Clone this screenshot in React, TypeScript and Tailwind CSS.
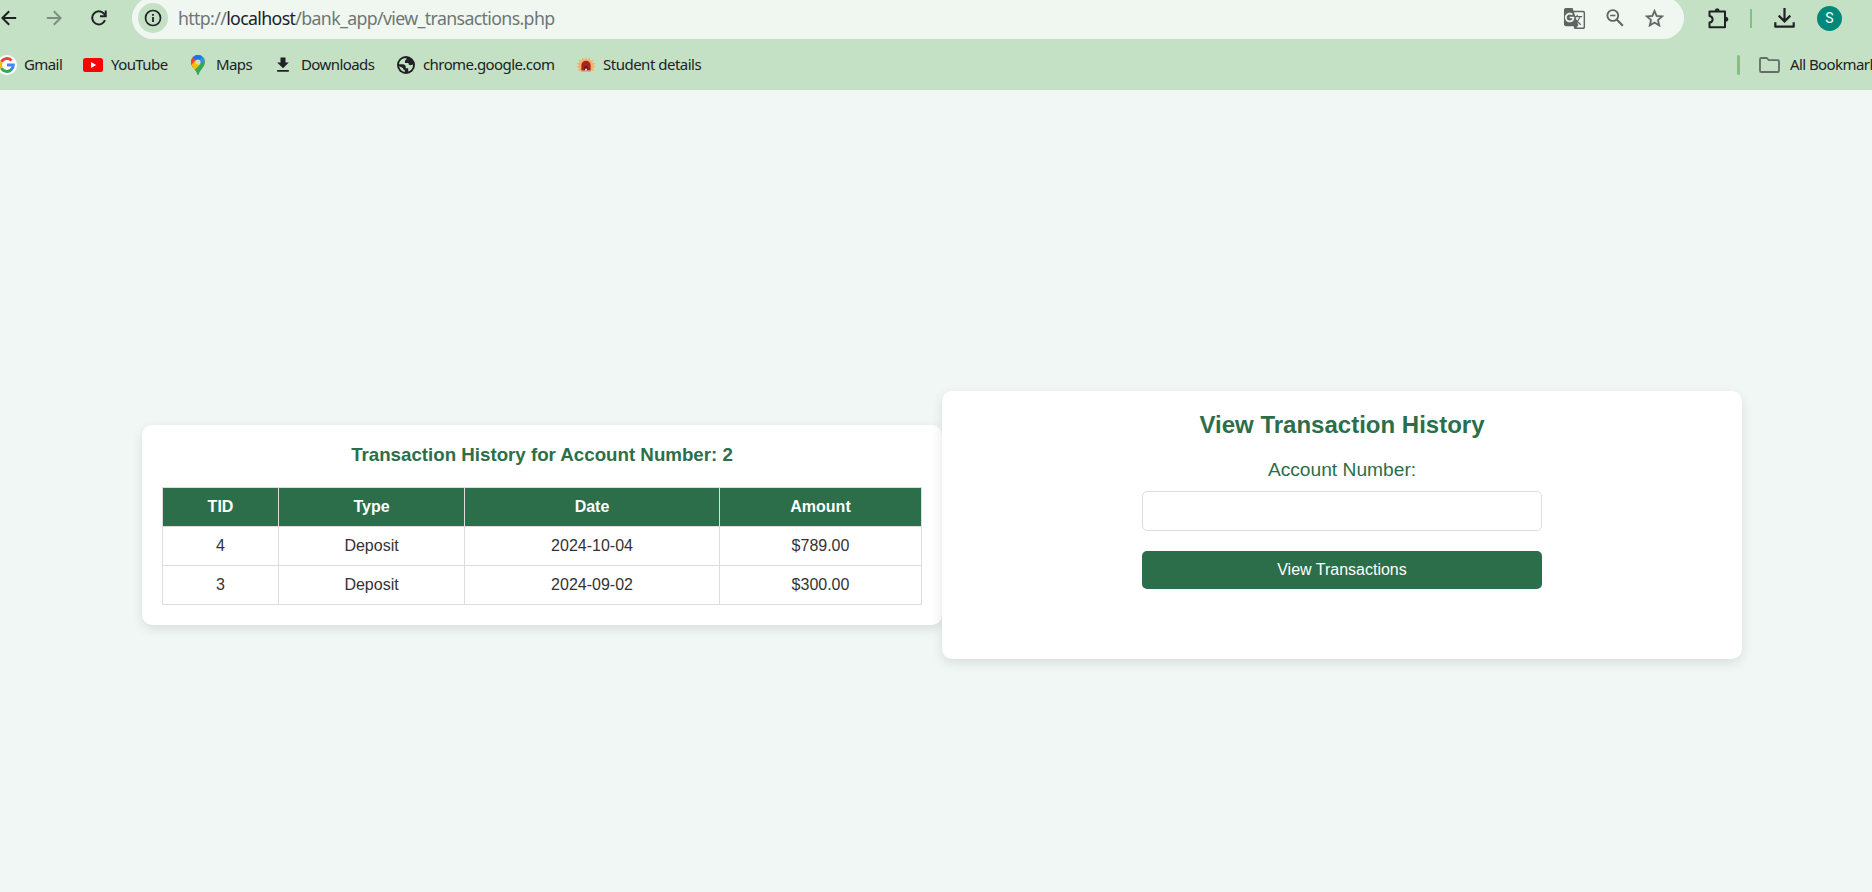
import React from 'react';
import { MdFileDownload, MdGTranslate } from 'react-icons/md';

type IconProps = { className?: string };

const BackIcon = ({ className }: IconProps) => (
  <svg viewBox="0 0 16 16" className={className} fill="none" stroke="currentColor" strokeWidth="2">
    <path d="M15.2 8H2M8.2 1.2 1.4 8l6.8 6.8" />
  </svg>
);

const ReloadIcon = ({ className }: IconProps) => (
  <svg viewBox="0 0 16 16" className={className} fill="none" stroke="currentColor" strokeWidth="2">
    <path d="M14 10.2A6.6 6.6 0 1 1 12.9 3.6L14.6 5.6" />
    <path d="M14.7 0.6V6.3H9" />
  </svg>
);

const InfoIcon = ({ className }: IconProps) => (
  <svg viewBox="0 0 18 18" className={className} fill="none" stroke="currentColor">
    <circle cx="9" cy="9" r="7.5" strokeWidth="1.7" />
    <path d="M9 8v5M9 5v1.8" strokeWidth="1.8" />
  </svg>
);

const ZoomOutIcon = ({ className }: IconProps) => (
  <svg viewBox="0 0 18 18" className={className} fill="none" stroke="currentColor">
    <circle cx="6.8" cy="6.5" r="5.4" strokeWidth="1.9" />
    <path d="M10.7 10.6 16.8 16.7" strokeWidth="2.1" />
    <path d="M4.2 6.5h5.2" strokeWidth="1.6" />
  </svg>
);

const StarIcon = ({ className }: IconProps) => (
  <svg viewBox="2 2 20 19" className={className} fill="currentColor">
    <path
      stroke="currentColor"
      strokeWidth=".3"
      d="M22 9.24l-7.19-.62L12 2 9.19 8.63 2 9.24l5.46 4.73L5.82 21 12 17.27 18.18 21l-1.63-7.03L22 9.24zM12 15.4l-3.76 2.27 1-4.28-3.32-2.88 4.38-.38L12 6.1l1.71 4.04 4.38.38-3.32 2.88 1 4.28L12 15.4z"
    />
  </svg>
);

const ExtensionIcon = ({ className }: IconProps) => (
  <svg viewBox="0 0 21 21" className={className}>
    <path
      d="M1.500 3.500h15.500v15.700H1.500v-4.600c2-.4 3.100-1.600 3.100-3.200S3.500 8.500 1.500 8.100z"
      fill="none"
      stroke="currentColor"
      strokeWidth="2"
      strokeLinejoin="round"
    />
    <path d="M7 2.800a2.200 2.200 0 0 1 4.400 0zM17.800 9a2.300 2.300 0 0 1 0 4.600z" fill="currentColor" stroke="currentColor" strokeWidth=".4" />
  </svg>
);

const DownloadTrayIcon = ({ className }: IconProps) => (
  <svg viewBox="0 0 21 20" className={className} fill="none" stroke="currentColor" strokeWidth="2.200">
    <path d="M10.500 0v13M4.700 7.600l5.800 5.800 5.800-5.800" />
    <path d="M1.300 14.200v4.500h18.400v-4.500" strokeLinejoin="round" />
  </svg>
);

const FolderIcon = ({ className }: IconProps) => (
  <svg viewBox="0 0 21 16" className={className} fill="none" stroke="currentColor" strokeWidth="1.800" strokeLinejoin="round">
    <path d="M1 2.300Q1 1 2.300 1H7.800L9.800 3.200H18.700Q20 3.200 20 4.500V13.700Q20 15 18.700 15H2.300Q1 15 1 13.700z" />
  </svg>
);

const GoogleIcon = ({ className }: IconProps) => (
  <svg viewBox="0 0 20 20" className={className}>
    <circle cx="10" cy="10" r="10" fill="#fff" />
    <g fill="none" strokeWidth="3">
      <path d="M4.400 6.900A6.300 6.300 0 0 1 14.500 5.500" stroke="#ea4335" />
      <path d="M4.400 13.100A6.300 6.300 0 0 1 4.400 6.900" stroke="#fbbc05" />
      <path d="M14.300 14.600A6.300 6.300 0 0 1 4.400 13.100" stroke="#34a853" />
      <path d="M10 10h6.300A6.300 6.300 0 0 1 14.100 14.800" stroke="#4285f4" />
    </g>
  </svg>
);

const YouTubeIcon = ({ className }: IconProps) => (
  <svg viewBox="0 0 20 14" className={className}>
    <rect width="20" height="14" rx="2.500" fill="#f00" />
    <path d="M8 4v6l5.200-3z" fill="#fff" />
  </svg>
);

const MapsIcon = ({ className }: IconProps) => (
  <svg viewBox="0 0 14 20" className={className}>
    <defs>
      <clipPath id="pin">
        <path d="M7 0a7 7 0 0 1 7 7c0 3-1.700 4.900-3.200 6.900C9.200 16 8.300 17.400 7.700 19.400q-.7 1.200-1.400 0C5.700 17.400 4.800 16 3.200 13.900 1.700 11.900 0 10 0 7a7 7 0 0 1 7-7z" />
      </clipPath>
    </defs>
    <g clipPath="url(#pin)">
      <path d="M0 0h14v20H0z" fill="#34a853" />
      <path d="M0 14.500 11.500 1 14 4V0H0z" fill="#4285f4" />
      <path d="M0 0v15l7-8L1.600 2.500z" fill="#ea4335" />
      <path d="M1.600 2.500 5 5.500 7 7 12 0H3z" fill="#1a73e8" />
      <path d="M0 10.200 4.800 5 9.500 9 3.200 15.500z" fill="#fbbc04" />
      <path d="M7 7 14 0v5L9.300 9.200z" fill="#4285f4" />
    </g>
    <circle cx="7" cy="7" r="2.600" fill="#c4e1c5" />
  </svg>
);

const GlobeIcon = ({ className }: IconProps) => (
  <svg viewBox="0 0 18 18" className={className}>
    <circle cx="9" cy="9" r="9" fill="#202124" />
    <path
      d="M9.200 2C5.300 2 2.300 4.800 2 8.300h3.700c1.900 0 3 1 3 2.600v1.300h2.500v3.400C14 14.700 16 12.200 16 9.200l-.1-.9c-.8.8-2 1.200-3.200.8-.9-.3-1.200-1-1.200-2H8V5.400c0-1 .5-1.600 1.300-1.600V2z"
      fill="#c4e1c5"
    />
    <path d="M2.100 10.200c.4 2.800 2.700 5.200 5.700 5.700v-2c-1.300 0-1.900-.8-1.900-2z" fill="#c4e1c5" />
  </svg>
);

const SunCrestIcon = ({ className }: IconProps) => (
  <svg viewBox="0 0 20 16" className={className}>
    <path
      d="M10 0l1.300 2.600L14 .7l.2 3 3.300-.9-1.400 3 3.500.5-2.700 2 2.800 1.800-3 .9 1.500 2.800-3.200-.4V15H5v-1.600l-3.200.4L3.300 11l-3-.9 2.800-1.800-2.700-2 3.500-.5-1.400-3 3.300.9.2-3 2.700 1.900z"
      fill="#f3b269"
    />
    <path d="M5.400 13.800V8.300a4.600 4.600 0 0 1 9.200 0v5.500z" fill="#a82320" />
    <path d="M8.200 13.800V10.800a1.800 1.800 0 0 1 3.600 0v3z" fill="#6d1715" />
    <path d="M5 13.500h10v1.300H5z" fill="#cdb09a" />
    <path d="M8.600 13.600 10 11l1.400 2.600z" fill="#fff" />
  </svg>
);

function Bookmark({ icon, label, className }: { icon: React.ReactNode; label: string; className: string }) {
  return (
    <div className={`flex shrink-0 items-center whitespace-nowrap ${className}`}>
      {icon}
      <span className="pb-0.5">{label}</span>
    </div>
  );
}

function BrowserBar() {
  return (
    <header className="h-[90px] overflow-hidden bg-[#c4e1c5] font-['Noto_Sans','Open_Sans',sans-serif] text-[#202124]">
      <div className="flex h-9 items-center">
        <BackIcon className="ml-px size-4 shrink-0" />
        <BackIcon className="ml-[29px] size-4 shrink-0 rotate-180 text-[#7d9080]" />
        <ReloadIcon className="ml-[29px] size-4 shrink-0" />
        <div className="ml-[25px] flex h-[42px] w-[1552px] shrink-0 items-center rounded-full bg-[#f0f7f1] pl-1.5">
          <div className="flex size-[30px] shrink-0 items-center justify-center rounded-full bg-[#c4e1c5]">
            <InfoIcon className="size-[18px]" />
          </div>
          <div className="ml-2.5 whitespace-nowrap text-[17.75px] tracking-[-0.65px] text-[#6f7675]">
            http://<span className="text-[#202124]">localhost</span>/bank_app/view_transactions.php
          </div>
          <div className="ml-auto flex items-center pr-5 text-[#5f6562]">
            <MdGTranslate className="size-[23px]" />
            <ZoomOutIcon className="ml-5 size-[18px]" />
            <StarIcon className="ml-[21px] h-[18px] w-[19px]" />
          </div>
        </div>
        <ExtensionIcon className="ml-6 size-[21px] shrink-0" />
        <div className="ml-[21px] h-[19px] w-0.5 shrink-0 bg-[#7dc383]" />
        <DownloadTrayIcon className="ml-[22px] h-5 w-[21px] shrink-0" />
        <div className="ml-[22px] flex size-[25px] shrink-0 items-center justify-center rounded-full bg-[#00897b] font-['Roboto',sans-serif] text-[14px] text-white">
          S
        </div>
      </div>
      <div className="flex h-[58px] items-center text-[15px] tracking-[-0.58px]">
        <Bookmark className="-ml-[3px] w-[86px] gap-[7px]" icon={<GoogleIcon className="size-5" />} label="Gmail" />
        <Bookmark className="w-[108px] gap-2" icon={<YouTubeIcon className="h-3.5 w-5" />} label="YouTube" />
        <Bookmark className="w-[82px] gap-[11px]" icon={<MapsIcon className="h-5 w-3.5" />} label="Maps" />
        <Bookmark className="w-[124px] gap-2" icon={<MdFileDownload className="size-5" />} label="Downloads" />
        <Bookmark className="w-[180px] gap-2" icon={<GlobeIcon className="size-[18px]" />} label="chrome.google.com" />
        <Bookmark className="-ml-px gap-[7px] tracking-[-0.5px]" icon={<SunCrestIcon className="h-4 w-5" />} label="Student details" />
        <div className="ml-auto flex w-[135px] items-center">
          <div className="h-5 w-[3px] shrink-0 rounded-sm bg-[#7dc383]" />
          <FolderIcon className="ml-[19px] h-4 w-[21px] shrink-0 text-[#666c68]" />
          <span className="ml-2.5 pb-0.5 whitespace-nowrap">All Bookmarks</span>
        </div>
      </div>
    </header>
  );
}

const rows = [
  ['4', 'Deposit', '2024-10-04', '$789.00'],
  ['3', 'Deposit', '2024-09-02', '$300.00'],
];

function HistoryCard() {
  return (
    <section className="h-[200px] w-[800px] rounded-[10px] bg-white px-5 pt-5 shadow-[0_4px_12px_rgba(0,0,0,0.1)]">
      <h3 className="h-[22px] text-center text-[18.72px] leading-[20px] font-bold text-[#2c6e49]">
        Transaction History for Account Number: 2
      </h3>
      <table className="mt-5 w-[760px] table-fixed border-collapse text-center text-base leading-[18px] text-[#333]">
        <colgroup>
          <col className="w-[116px]" />
          <col className="w-[186px]" />
          <col className="w-[255px]" />
          <col className="w-[202px]" />
        </colgroup>
        <thead>
          <tr className="h-[39px] bg-[#2c6e49] text-white">
            {['TID', 'Type', 'Date', 'Amount'].map((heading) => (
              <th key={heading} className="border border-[#ddd] p-0 font-bold">
                {heading}
              </th>
            ))}
          </tr>
        </thead>
        <tbody>
          {rows.map((row) => (
            <tr key={row[0]} className="h-[39px]">
              {row.map((cell) => (
                <td key={cell} className="border border-[#ddd] p-0">
                  {cell}
                </td>
              ))}
            </tr>
          ))}
        </tbody>
      </table>
    </section>
  );
}

function SearchCard() {
  return (
    <section className="h-[268px] w-[800px] rounded-[10px] bg-white pt-5 text-center shadow-[0_4px_12px_rgba(0,0,0,0.1)]">
      <h2 className="text-2xl leading-7 font-bold text-[#2c6e49]">View Transaction History</h2>
      <form className="mx-auto mt-5 flex w-[400px] flex-col" onSubmit={(e) => e.preventDefault()}>
        <label htmlFor="account" className="text-[19.2px] leading-[22px] text-[#2c6e49]">
          Account Number:
        </label>
        <input id="account" className="mt-2.5 h-10 rounded-[5px] border border-[#ddd] bg-white px-2.5 outline-none" />
        <button className="mt-5 h-[38px] rounded-[5px] bg-[#2c6e49] text-base leading-[18px] text-white">View Transactions</button>
      </form>
    </section>
  );
}

export default function App() {
  return (
    <div className="h-[892px] overflow-hidden bg-[#f0f7f5] font-['Liberation_Sans',Arial,sans-serif]">
      <BrowserBar />
      <main className="flex h-[870px] items-center justify-center pr-0 pl-3">
        <HistoryCard />
        <SearchCard />
      </main>
    </div>
  );
}
